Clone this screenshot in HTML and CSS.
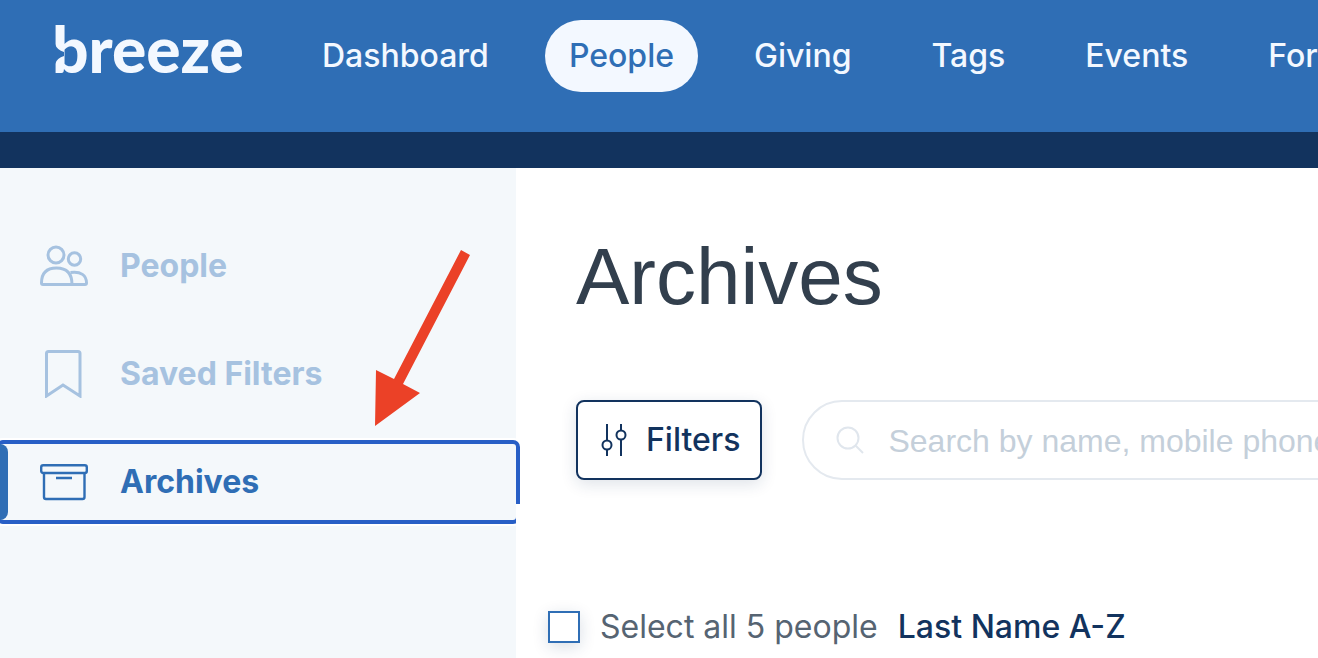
FILE: index.html
```html
<!DOCTYPE html>
<html lang="en">
<head>
  <meta charset="utf-8">
  <title>Archives</title>
  <link rel="stylesheet" href="styles.css">
</head>
<body>
  <header class="header">
    <a href="#" class="logo">breeze
      <svg class="logo-notch" width="10" height="20" viewBox="0 0 10 20" aria-hidden="true">
        <path d="M0 0 Q2 6 9 8 L9 12 Q2 14 0 20 Z"/>
      </svg>
    </a>
    <nav class="nav">
      <a href="#">Dashboard</a>
      <a href="#" class="current">People</a>
      <a href="#">Giving</a>
      <a href="#">Tags</a>
      <a href="#">Events</a>
      <a href="#">Forms</a>
    </nav>
  </header>
  <div class="band"></div>

  <div class="page">
    <aside class="sidebar">
      <a href="#" class="side-link">
        <svg class="side-icon" viewBox="0 0 48 48">
          <circle cx="16" cy="13" r="8"/>
          <circle cx="34.5" cy="17" r="6.2"/>
          <path d="M3 42.5 Q1.5 42.5 1.5 41 C1.5 31 7 26 16.5 26 C26 26 32 31 32 42.5"/>
          <path d="M30.5 30.5 C41 29 46.5 33.5 46.5 41 Q46.5 42.5 45 42.5 H3"/>
        </svg>
        People
      </a>
      <a href="#" class="side-link">
        <svg class="side-icon" viewBox="0 0 48 48">
          <path d="M8.5 1.5 H38 Q40 1.5 40 3.5 V46 L23 35 L6.500 46 V3.500 Q6.500 1.500 8.500 1.500 Z"/>
        </svg>
        Saved Filters
      </a>
      <a href="#" class="side-link active">
        <svg class="side-icon" viewBox="0 0 48 48">
          <rect x="1.2" y="7.2" width="45.6" height="7.8" rx="2"/>
          <path d="M4 15 V39 Q4 41 6 41 H42.500 Q44.500 41 44.500 39 V15 M16 20 H32"/>
        </svg>
        Archives
      </a>
    </aside>

    <main class="main">
      <h1>Archives</h1>
      <div class="toolbar">
        <button type="button" class="filters">
          <svg width="26" height="32" viewBox="0 0 26 32">
            <path d="M6 0 V16 M6 26 V32 M20 0 V6 M20 16 V32"/>
            <circle cx="6" cy="21" r="4.5"/>
            <circle cx="20" cy="11" r="4.5"/>
          </svg>
          Filters
        </button>
        <div class="search">
          <svg width="28" height="28" viewBox="0 0 28 28">
            <circle cx="12" cy="12" r="10.5"/>
            <path d="M19 19 L27 27"/>
          </svg>
          <input type="text" aria-label="Search people" placeholder="Search by name, mobile phone, or email">
        </div>
      </div>
      <div class="list">
        <input type="checkbox" id="selectAll">
        <label for="selectAll">Select all 5 people</label>
        <button type="button" class="sort">Last Name A-Z</button>
      </div>
    </main>
  </div>

  <svg class="arrow" width="96" height="178" viewBox="0 0 96 178" aria-hidden="true">
    <path d="M87 0 L96 5 L29 134 L46 143 L1 176 L2 120 L20 129 Z"/>
  </svg>
</body>
</html>
```
FILE: styles.css
```css
* {
  box-sizing: border-box;
}

body {
  margin: 0;
  min-height: 100vh;
  display: flex;
  flex-direction: column;
  position: relative;
  overflow: hidden;
  background: #fff;
  font-family: Inter, "Liberation Sans", sans-serif;
  font-size: 32px;
  line-height: 40px;
}

a {
  text-decoration: none;
}

button,
input {
  font: inherit;
}

svg {
  flex-shrink: 0;
  fill: none;
}

.header {
  display: flex;
  align-items: flex-start;
  height: 132px;
  padding: 20px 0 0 52px;
  background: #2f6eb5;
}

.logo {
  position: relative;
  flex: 0 0 246px;
  color: #f3f8ff;
  font-family: Lato, sans-serif;
  font-size: 64px;
  font-weight: 900;
  line-height: 58px;
}

.logo-notch {
  position: absolute;
  left: 3px;
  top: 24px;
  fill: #2f6eb5;
}

.nav {
  display: flex;
  gap: 32px;
}

.nav a {
  padding: 16px 24px;
  border-radius: 36px;
  color: #f3f8ff;
  font-weight: 500;
}

.nav .current {
  background: #f3f8ff;
  color: #2f6eb5;
}

.band {
  height: 36px;
  background: #12335e;
}

.page {
  display: flex;
  flex: 1;
}

.sidebar {
  display: flex;
  flex: 0 0 516px;
  flex-direction: column;
  gap: 32px;
  padding-top: 60px;
  background: #f4f8fb;
}

.side-link {
  display: flex;
  align-items: center;
  gap: 32px;
  height: 76px;
  padding-left: 40px;
  color: #a6c2e0;
  font-weight: 700;
}

.side-icon {
  width: 48px;
  height: 48px;
  stroke: currentColor;
  stroke-width: 3;
}

.active {
  position: relative;
  border-radius: 3px;
  color: #2f6eb5;
  box-shadow: 0 0 0 4px #285fc6, 0 0 0 6px #fff;
}

.active .side-icon {
  stroke-width: 2.4;
}

.active::before {
  content: "";
  position: absolute;
  left: 0;
  top: 0;
  width: 8px;
  height: 100%;
  border-radius: 0 8px 8px 0;
  background: #2f6eb5;
}

.main {
  display: flex;
  flex: 1;
  flex-direction: column;
  min-width: 0;
}

h1 {
  margin: 0;
  padding: 65px 0 0 60px;
  color: #323f4d;
  font-family: "Liberation Sans", Arial, sans-serif;
  font-size: 80px;
  font-weight: 400;
  line-height: 88px;
}

.toolbar {
  display: flex;
  gap: 40px;
  padding: 79px 0 24px 60px;
}

.filters {
  display: flex;
  flex-shrink: 0;
  align-items: center;
  gap: 19px;
  height: 80px;
  padding: 0 20px 0 23px;
  border: 2px solid #12335e;
  border-radius: 8px;
  background: #fff;
  box-shadow: 0 4px 16px rgba(18, 51, 94, 0.14);
  color: #12335e;
  font-weight: 500;
}

.filters svg {
  stroke: #12335e;
  stroke-width: 2;
}

.search {
  display: flex;
  flex: 1 0 800px;
  align-items: center;
  gap: 24px;
  height: 80px;
  padding: 0 32px;
  border: 2px solid #e4e9ef;
  border-radius: 40px;
}

.search svg {
  stroke: #e0e6ed;
  stroke-width: 2;
}

.search input {
  flex: 1;
  padding: 2px 0 0;
  border: 0;
  outline: 0;
  background: none;
  font-family: "Liberation Sans", Arial, sans-serif;
}

.search input::placeholder {
  color: #c4cfda;
}

/* covers the focus ring of the sidebar where the two meet */
.list {
  position: relative;
  display: flex;
  flex: 1;
  align-items: flex-start;
  gap: 20px;
  padding: 103px 0 0 32px;
  background: #fff;
  color: #566472;
}

.list input {
  appearance: none;
  width: 32px;
  height: 32px;
  margin: 4px 0 0;
  border: 2px solid #2f6eb5;
  background: #fff;
  box-shadow: 0 4px 16px rgba(18, 51, 94, 0.16);
}

.sort {
  padding: 0;
  border: 0;
  background: none;
  color: #12335e;
  font-weight: 500;
}

.arrow {
  position: absolute;
  left: 374px;
  top: 250px;
  fill: #eb4127;
}
```
